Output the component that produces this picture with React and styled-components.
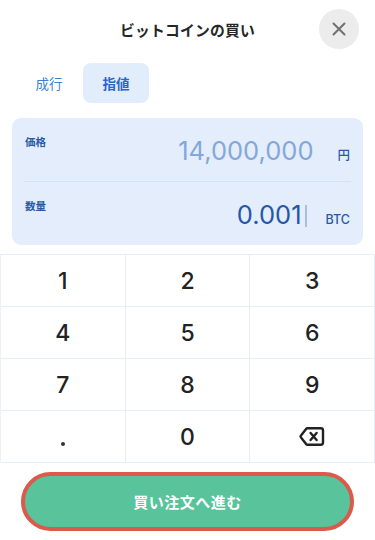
import React from "react";
import styled, { createGlobalStyle } from "styled-components";

const Global = createGlobalStyle`
  html, body { margin: 0; padding: 0; background: #ffffff; }
  body {
    font-family: Inter, "Noto Sans CJK JP", "Noto Sans", sans-serif;
    -webkit-font-smoothing: antialiased;
  }
  * { box-sizing: border-box; }
`;

const Page = styled.div`
  width: 375px;
  height: 540px;
  background: #fff;
  display: flex;
  flex-direction: column;
  overflow: hidden;
`;

const Header = styled.header`
  height: 58px;
  display: grid;
  grid-template-columns: 1fr auto 1fr;
  align-items: center;
  padding: 0 16px;
`;

const Title = styled.h1`
  grid-column: 2;
  margin: 0;
  font-family: "Noto Sans CJK JP", sans-serif;
  font-size: 14.8px;
  font-weight: 700;
  color: #262626;
  letter-spacing: 0.2px;
`;

const CloseButton = styled.button`
  grid-column: 3;
  justify-self: end;
  width: 40px;
  height: 40px;
  border-radius: 50%;
  border: none;
  background: #ececec;
  display: flex;
  align-items: center;
  justify-content: center;
  padding: 0;
`;

const Tabs = styled.div`
  margin-top: 5px;
  display: flex;
  gap: 1px;
  padding: 0 16px;
`;

const Tab = styled.button`
  width: 66px;
  height: 40px;
  border: none;
  border-radius: 8px;
  background: ${(p) => (p.$active ? "#e2edfb" : "transparent")};
  color: ${(p) => (p.$active ? "#2a67c4" : "#3f7fd6")};
  font-family: "Noto Sans CJK JP", sans-serif;
  font-size: 13.5px;
  font-weight: ${(p) => (p.$active ? 700 : 400)};
  padding: 0;
`;

const Card = styled.section`
  margin: 15px 12px 0;
  height: 127px;
  background: #e3edfb;
  border-radius: 9px;
  display: flex;
  flex-direction: column;
  padding: 0 12px;
`;

const Field = styled.div`
  flex: 1;
  display: flex;
  align-items: flex-start;
  justify-content: space-between;
  padding: 0 1px;
  & + & {
    border-top: 1px solid #d3e2f5;
  }
`;

const Label = styled.span`
  margin-top: 16px;
  font-family: "Noto Sans CJK JP", sans-serif;
  font-size: 10.5px;
  font-weight: 700;
  color: #2a5aa6;
`;

const ValueGroup = styled.div`
  margin-top: 17px;
  display: flex;
  align-items: baseline;
`;

const Value = styled.span`
  position: relative;
  font-family: Inter, "Noto Sans", sans-serif;
  font-size: 25.5px;
  font-weight: 400;
  line-height: 32px;
  color: ${(p) => (p.$placeholder ? "#84a7d9" : "#2556aa")};
  ${(p) =>
    p.$focused &&
    `
    &::after {
      content: "";
      position: absolute;
      right: -5px;
      top: 6px;
      width: 2px;
      height: 22px;
      background: #a9bfdc;
    }
  `}
`;

const Unit = styled.span`
  margin-left: 24px;
  font-family: Inter, "Noto Sans CJK JP", sans-serif;
  font-size: 12.5px;
  font-weight: 500;
  color: #2a5aa6;
`;

const Keypad = styled.div`
  margin-top: 9px;
  display: grid;
  grid-template-columns: repeat(3, 1fr);
  grid-auto-rows: 52px;
  border-top: 1px solid #e8eef6;
  border-left: 1px solid #eef2f8;
`;

const Key = styled.button`
  border: none;
  border-right: 1px solid #e8eef6;
  border-bottom: 1px solid #e8eef6;
  background: #fff;
  display: flex;
  align-items: center;
  justify-content: center;
  font-family: Inter, "Noto Sans", sans-serif;
  font-size: 23px;
  font-weight: 500;
  color: #222;
  padding: 0;
`;

const Dot = styled.span`
  width: 4px;
  height: 4px;
  border-radius: 50%;
  background: #333;
  margin-top: 14px;
`;

const Footer = styled.div`
  margin-top: 9px;
  padding: 0 21px;
`;

const SubmitButton = styled.button`
  width: 333px;
  height: 59px;
  border-radius: 30px;
  border: 4px solid #db5a4b;
  background: #59c39c;
  color: #fff;
  font-family: "Noto Sans CJK JP", sans-serif;
  font-size: 15px;
  font-weight: 700;
  letter-spacing: 0.5px;
  padding: 0;
`;

const CloseIcon = () => (
  <svg width="16" height="16" viewBox="0 0 16 16" fill="none">
    <path d="M2.5 2.5 13.5 13.5 M13.5 2.5 2.5 13.5" stroke="#707070" strokeWidth="2" strokeLinecap="round" />
  </svg>
);

const BackspaceIcon = () => (
  <svg width="26" height="21" viewBox="0 0 26 21" fill="none">
    <path
      d="M8.6 2.2h13.2a2.2 2.2 0 0 1 2.2 2.2v12.2a2.2 2.2 0 0 1-2.2 2.2H8.6a2 2 0 0 1-1.5-.7L2 11.4a1.4 1.4 0 0 1 0-1.8l5.1-6.7a2 2 0 0 1 1.5-.7z"
      stroke="#222"
      strokeWidth="2.4"
      strokeLinejoin="round"
    />
    <path d="M11.6 7 17.6 14 M17.6 7 11.6 14" stroke="#222" strokeWidth="2.4" strokeLinecap="round" />
  </svg>
);

const keys = ["1", "2", "3", "4", "5", "6", "7", "8", "9", ".", "0", "del"];

export default function App() {
  return (
    <>
      <Global />
      <Page>
        <Header>
          <Title>ビットコインの買い</Title>
          <CloseButton aria-label="閉じる">
            <CloseIcon />
          </CloseButton>
        </Header>
        <Tabs>
          <Tab>成行</Tab>
          <Tab $active>指値</Tab>
        </Tabs>
        <Card>
          <Field>
            <Label>価格</Label>
            <ValueGroup>
              <Value $placeholder>14,000,000</Value>
              <Unit>円</Unit>
            </ValueGroup>
          </Field>
          <Field>
            <Label>数量</Label>
            <ValueGroup>
              <Value $focused>0.001</Value>
              <Unit>BTC</Unit>
            </ValueGroup>
          </Field>
        </Card>
        <Keypad>
          {keys.map((k) => (
            <Key key={k}>
              {k === "del" ? <BackspaceIcon /> : k === "." ? <Dot /> : k}
            </Key>
          ))}
        </Keypad>
        <Footer>
          <SubmitButton>買い注文へ進む</SubmitButton>
        </Footer>
      </Page>
    </>
  );
}
